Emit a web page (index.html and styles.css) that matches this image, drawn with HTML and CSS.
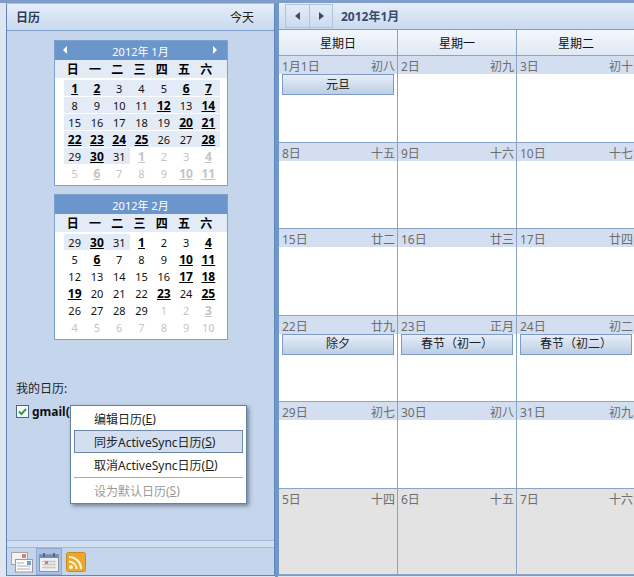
FILE: index.html
```html
<!DOCTYPE html>
<html lang="zh-CN">

<head>
    <meta charset="UTF-8">
    <title>日历</title>
    <link rel="stylesheet" href="styles.css">
</head>

<body>
    <div class="window">
        <!-- panel izquierdo -->
        <div class="side">
            <div class="side-head">
                <b>日历</b>
                <span>今天</span>
            </div>
            <div class="side-body">
                <div class="mini">
                    <div class="mini-title">
                        <i class="arrow-left"></i>
                        <span>2012年 1月</span>
                        <i class="arrow-right"></i>
                    </div>
                    <div class="mini-week">
                        <span>日</span><span>一</span><span>二</span><span>三</span><span>四</span><span>五</span><span>六</span>
                    </div>
                    <div class="mini-days">
                        <span class="tint busy">1</span><span class="tint busy">2</span><span class="tint">3</span><span class="tint">4</span><span class="tint">5</span><span class="tint busy">6</span><span class="tint busy">7</span>
                        <span class="tint">8</span><span class="tint">9</span><span class="tint">10</span><span class="tint">11</span><span class="tint busy">12</span><span class="tint">13</span><span class="tint busy">14</span>
                        <span class="tint">15</span><span class="tint">16</span><span class="tint">17</span><span class="tint">18</span><span class="tint">19</span><span class="tint busy">20</span><span class="tint busy">21</span>
                        <span class="tint busy">22</span><span class="tint busy">23</span><span class="tint busy">24</span><span class="tint busy">25</span><span class="tint">26</span><span class="tint">27</span><span class="tint busy">28</span>
                        <span class="tint">29</span><span class="tint busy">30</span><span class="tint">31</span><span class="other busy">1</span><span class="other">2</span><span class="other">3</span><span class="other busy">4</span>
                        <span class="other">5</span><span class="other busy">6</span><span class="other">7</span><span class="other">8</span><span class="other">9</span><span class="other busy">10</span><span class="other busy">11</span>
                    </div>
                </div>
                <div class="mini">
                    <div class="mini-title">
                        <span>2012年 2月</span>
                    </div>
                    <div class="mini-week">
                        <span>日</span><span>一</span><span>二</span><span>三</span><span>四</span><span>五</span><span>六</span>
                    </div>
                    <div class="mini-days">
                        <span class="tint">29</span><span class="tint busy">30</span><span class="tint">31</span><span class="busy">1</span><span>2</span><span>3</span><span class="busy">4</span>
                        <span>5</span><span class="busy">6</span><span>7</span><span>8</span><span>9</span><span class="busy">10</span><span class="busy">11</span>
                        <span>12</span><span>13</span><span>14</span><span>15</span><span>16</span><span class="busy">17</span><span class="busy">18</span>
                        <span class="busy">19</span><span>20</span><span>21</span><span>22</span><span class="busy">23</span><span>24</span><span class="busy">25</span>
                        <span>26</span><span>27</span><span>28</span><span>29</span><span class="other">1</span><span class="other">2</span><span class="other busy">3</span>
                        <span class="other">4</span><span class="other">5</span><span class="other">6</span><span class="other">7</span><span class="other">8</span><span class="other">9</span><span class="other">10</span>
                    </div>
                </div>
                <div class="my-title">我的日历:</div>
                <div class="my-item">
                    <svg class="check" width="13" height="13" viewBox="0 0 13 13">
                        <rect x="0.5" y="0.5" width="12" height="12" fill="#f6f9fd" stroke="#45688f" />
                        <path d="M3 6.5l2.4 2.6L10 4" fill="none" stroke="#2f9a3a" stroke-width="2" />
                    </svg>
                    <b>gmail(</b>
                </div>
            </div>
            <div class="side-band"></div>
            <div class="side-foot">
                <span class="foot-btn">
                    <svg width="22" height="22" viewBox="0 0 22 22">
                        <rect x="0.5" y="1.5" width="16" height="12" fill="#f2f2f2" stroke="#a5a5a5" />
                        <rect x="11" y="3" width="4" height="4" fill="#cf8080" />
                        <rect x="4.5" y="8.5" width="17" height="12.5" fill="#fbfbfb" stroke="#9a9a9a" />
                        <rect x="16" y="10" width="4" height="4" fill="#6ea0d8" />
                        <path d="M6 12h7M6 15h13M6 18h13" stroke="#b0b0b0" />
                    </svg>
                </span>
                <span class="foot-btn active">
                    <svg width="20" height="20" viewBox="0 0 20 20">
                        <rect x="0.5" y="2.5" width="19" height="17" fill="#efefef" stroke="#8b96aa" />
                        <rect x="1" y="3" width="18" height="3" fill="#5f93d3" />
                        <path d="M5 1v4M15 1v4" stroke="#5a6a85" stroke-width="2" />
                        <path d="M3 9.5h14M3 12.5h14M3 15.5h14M6 8v9M9 8v9M12 8v9M15 8v9" stroke="#cacaca" />
                        <rect x="6" y="9" width="3" height="3" fill="#d47a7a" />
                    </svg>
                </span>
                <span class="foot-btn">
                    <svg width="20" height="20" viewBox="0 0 20 20">
                        <rect x="0.5" y="0.5" width="19" height="19" rx="2" fill="#eca82e" stroke="#c98a1e" />
                        <circle cx="5" cy="15" r="2" fill="#fff3d0" />
                        <path d="M3 9.5a7.5 7.5 0 0 1 7.5 7.5M3 5a12 12 0 0 1 12 12" fill="none" stroke="#fff3d0" stroke-width="2.2" />
                    </svg>
                </span>
            </div>
        </div>

        <div class="splitter"></div>

        <!-- vista del mes -->
        <div class="main">
            <div class="main-head">
                <div class="nav">
                    <span class="nav-btn"><i class="nav-left"></i></span>
                    <span class="nav-btn"><i class="nav-right"></i></span>
                </div>
                <b>2012年1月</b>
            </div>
            <div class="week-head">
                <span>星期日</span><span>星期一</span><span>星期二</span>
            </div>
            <div class="month">
                <div class="cell"><div class="date"><span>1月1日</span><span>初八</span></div><div class="event">元旦</div></div>
                <div class="cell"><div class="date"><span>2日</span><span>初九</span></div></div>
                <div class="cell"><div class="date"><span>3日</span><span>初十</span></div></div>

                <div class="cell"><div class="date"><span>8日</span><span>十五</span></div></div>
                <div class="cell"><div class="date"><span>9日</span><span>十六</span></div></div>
                <div class="cell"><div class="date"><span>10日</span><span>十七</span></div></div>

                <div class="cell"><div class="date"><span>15日</span><span>廿二</span></div></div>
                <div class="cell"><div class="date"><span>16日</span><span>廿三</span></div></div>
                <div class="cell"><div class="date"><span>17日</span><span>廿四</span></div></div>

                <div class="cell"><div class="date"><span>22日</span><span>廿九</span></div><div class="event">除夕</div></div>
                <div class="cell"><div class="date"><span>23日</span><span>正月</span></div><div class="event">春节（初一）</div></div>
                <div class="cell"><div class="date"><span>24日</span><span>初二</span></div><div class="event">春节（初二）</div></div>

                <div class="cell"><div class="date"><span>29日</span><span>初七</span></div></div>
                <div class="cell"><div class="date"><span>30日</span><span>初八</span></div></div>
                <div class="cell"><div class="date"><span>31日</span><span>初九</span></div></div>

                <div class="cell next"><div class="date"><span>5日</span><span>十四</span></div></div>
                <div class="cell next"><div class="date"><span>6日</span><span>十五</span></div></div>
                <div class="cell next"><div class="date"><span>7日</span><span>十六</span></div></div>
            </div>
        </div>

        <!-- menu contextual -->
        <div class="menu">
            <div class="menu-item">编辑日历(<u>E</u>)</div>
            <div class="menu-item selected">同步ActiveSync日历(<u>S</u>)</div>
            <div class="menu-item">取消ActiveSync日历(<u>D</u>)</div>
            <div class="menu-line"></div>
            <div class="menu-item disabled">设为默认日历(<u>S</u>)</div>
        </div>
    </div>
</body>

</html>
```

FILE: styles.css
```css
* {
    box-sizing: border-box;
}

body {
    margin: 0;
    width: 634px;
    height: 577px;
    overflow: hidden;
    background-color: #dfe6f0;
    font-family: "Noto Sans", "Noto Sans CJK SC", sans-serif;
    font-size: 12px;
    color: #222;
}

.window {
    position: relative;
    display: flex;
    width: 634px;
    height: 577px;
    padding-left: 6px;
    border-top: 3px solid #7f9ecb;
}

/* panel izquierdo */
.side {
    width: 269px;
    height: 573px;
    display: flex;
    flex-direction: column;
    background-color: #c5d5ec;
    border: 1px solid #5f86b8;
    border-top-color: #a9c0de;
}

.side-head {
    height: 27px;
    flex: none;
    display: flex;
    justify-content: space-between;
    align-items: center;
    padding: 0 20px 0 9px;
    background: linear-gradient(#e6eef9, #c9d9ee);
    border-bottom: 1px solid #7f9fcb;
    color: #2f3b55;
}

.side-head span {
    color: #222;
}

.side-body {
    flex: 1;
    padding-top: 9px;
}

.mini {
    width: 174px;
    margin: 0 auto 8px;
    padding-bottom: 4px;
    background-color: #fff;
    border: 1px solid #7fa0cc;
}

.mini-title {
    height: 19px;
    display: flex;
    justify-content: center;
    align-items: center;
    position: relative;
    background-color: #6b96cc;
    color: #fff;
    font-size: 11px;
}

.arrow-left,
.arrow-right {
    position: absolute;
    top: 5px;
    border-top: 4px solid transparent;
    border-bottom: 4px solid transparent;
}

.arrow-left {
    left: 8px;
    border-right: 4px solid #fff;
}

.arrow-right {
    right: 10px;
    border-left: 4px solid #fff;
}

.mini-week {
    height: 18px;
    margin-bottom: 2px;
    padding: 0 9px 0 7px;
    display: grid;
    grid-template-columns: repeat(7, 1fr);
    align-items: center;
    text-align: center;
    background-color: #e3ebf7;
    color: #000;
    font-weight: bold;
}

.mini-days {
    margin: 0 7px 0 9px;
    display: grid;
    grid-template-columns: repeat(7, 1fr);
    row-gap: 1px;
    text-align: center;
    font-size: 11px;
    color: #111;
}

.mini-days span {
    height: 16px;
    line-height: 17px;
}

.tint {
    background-color: #e3ebf7;
}

.busy {
    font-weight: bold;
    font-size: 12px;
    text-decoration: underline;
    color: #000;
}

.mini-days .other {
    color: #c4c4c4;
}

.my-title {
    margin-top: 41px;
    margin-left: 9px;
    height: 16px;
    line-height: 16px;
    color: #222;
}

.my-item {
    margin: 6px 0 0 9px;
    display: flex;
    align-items: center;
    gap: 3px;
    height: 16px;
}

.my-item b {
    color: #111;
}

.side-band {
    height: 8px;
    flex: none;
    background-color: #d2dff0;
    border-top: 1px solid #9fb8d9;
    border-bottom: 1px solid #9fb8d9;
}

.side-foot {
    height: 27px;
    flex: none;
    display: flex;
    align-items: center;
    padding-left: 2px;
    gap: 1px;
}

.foot-btn {
    width: 26px;
    height: 27px;
    display: flex;
    align-items: center;
    justify-content: center;
}

.foot-btn.active {
    background-color: #a9c1e4;
    border: 1px solid #8eabd3;
}

.splitter {
    width: 3px;
    height: 574px;
    flex: none;
    background-color: #6f97cb;
}

/* vista del mes */
.main {
    flex: 1;
    min-width: 0;
    height: 573px;
    overflow: hidden;
    display: flex;
    flex-direction: column;
    background-color: #fff;
    border-left: 1px solid #6f97cb;
    border-bottom: 1px solid #7f9bc2;
}

.main-head {
    height: 27px;
    flex: none;
    display: flex;
    align-items: center;
    gap: 8px;
    padding-left: 6px;
    background: linear-gradient(#e6eef9, #c9d9ee);
    border-bottom: 1px solid #7f9fcb;
    color: #3a4a6a;
}

.nav {
    display: flex;
    height: 24px;
    border: 1px solid #b0c4e0;
}

.nav-btn {
    width: 23px;
    display: flex;
    align-items: center;
    justify-content: center;
}

.nav-btn + .nav-btn {
    border-left: 1px solid #b0c4e0;
}

.nav-left,
.nav-right {
    border-top: 4px solid transparent;
    border-bottom: 4px solid transparent;
}

.nav-left {
    border-right: 5px solid #3f4a5c;
}

.nav-right {
    border-left: 5px solid #3f4a5c;
}

.week-head {
    height: 26px;
    flex: none;
    width: 357px;
    display: grid;
    grid-template-columns: repeat(3, 119px);
    background: linear-gradient(#f4f7fd, #dfe8f5);
    border-bottom: 1px solid #8aa4c6;
}

.week-head span {
    display: flex;
    align-items: center;
    justify-content: center;
    border-right: 1px solid #8aa4c6;
    color: #111;
}

.month {
    flex: 1;
    width: 357px;
    display: grid;
    grid-template-columns: repeat(3, 119px);
    grid-template-rows: repeat(6, 1fr);
}

.cell {
    border-right: 1px solid #8aa4c6;
    border-bottom: 1px solid #8aa4c6;
}

.cell.next {
    background-color: #e3e3e3;
}

.date {
    height: 18px;
    display: flex;
    justify-content: space-between;
    align-items: center;
    padding: 2px 2px 0 3px;
    background-color: #d3dff0;
    color: #6d6d6d;
}

.next .date {
    background-color: transparent;
}

.event {
    height: 21px;
    margin: 0 3px;
    padding-bottom: 2px;
    display: flex;
    align-items: center;
    justify-content: center;
    background: linear-gradient(#e6eef9, #bccde5);
    border: 1px solid #7d9bc4;
}

/* menu contextual */
.menu {
    position: absolute;
    left: 70px;
    top: 402px;
    width: 177px;
    height: 99px;
    padding: 1px 3px;
    background-color: #fff;
    border: 1px solid #64819f;
    box-shadow: 2px 2px 4px rgba(40, 50, 70, 0.5);
}

.menu-item {
    height: 23px;
    padding-left: 19px;
    display: flex;
    align-items: center;
    border: 1px solid transparent;
    white-space: pre;
}

.menu-item.selected {
    background-color: #d3dff0;
    border-color: #6d87a8;
}

.menu-item.disabled {
    color: #9a9a9a;
}

.menu-line {
    height: 1px;
    margin: 1px 0 1px;
    background-color: #aaa;
}
```
